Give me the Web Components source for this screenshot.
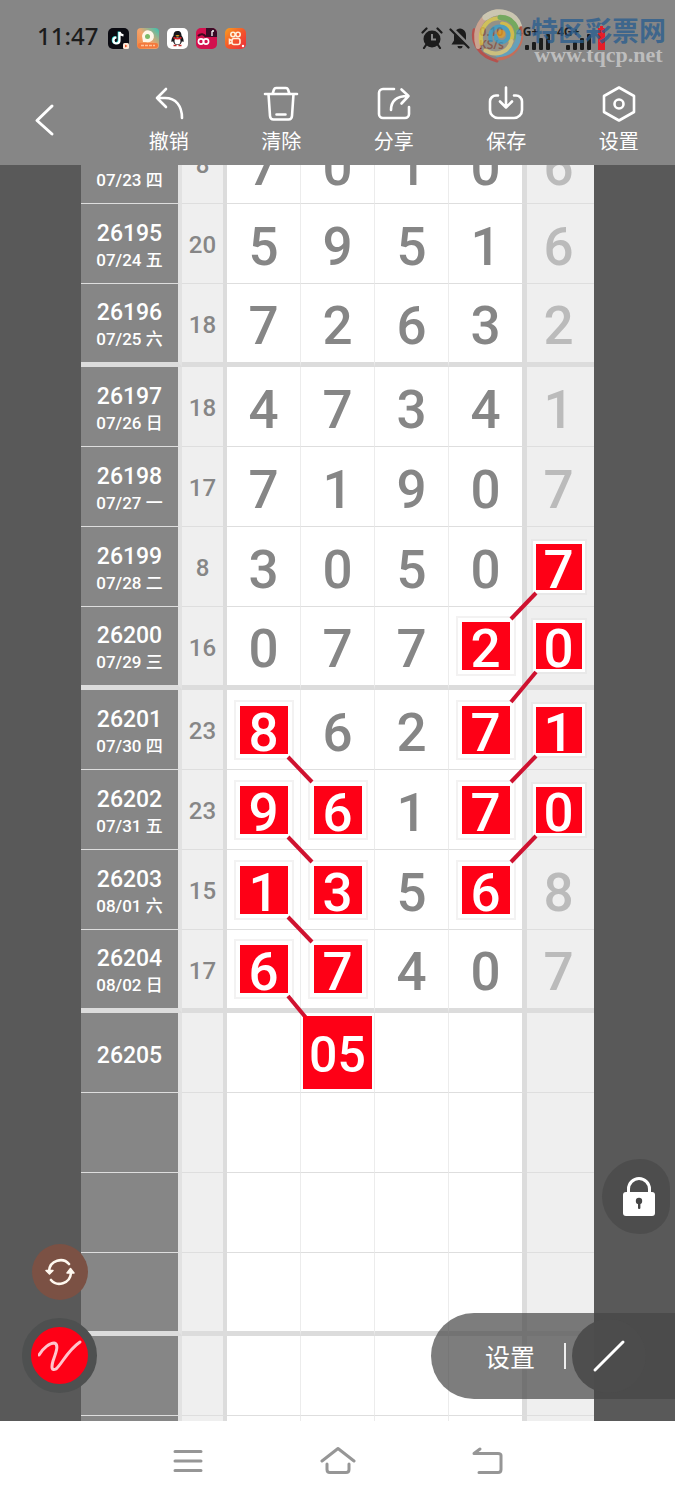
<!DOCTYPE html>
<html lang="zh-CN">
<head>
<meta charset="UTF-8">
<meta name="viewport" content="width=device-width, initial-scale=1.0">
<title>走势图</title>
<style>
  html, body { margin: 0; padding: 0; height: 100%; }
  body {
    font-family: "Roboto", "Noto Sans CJK SC", sans-serif;
    background: #595959;
    color: white;
  }
</style>
</head>
<body>
<trend-app></trend-app>

<script>
class StatusBar extends HTMLElement {
  connectedCallback() {
    this.attachShadow({ mode: 'open' });
    const signal = `
      <span class="signal">
        <span class="net">4G+</span>
        <svg width="26" height="16" viewBox="0 0 26 16" fill="currentColor">
          <rect x="0" y="11" width="4" height="5" rx="1"/>
          <rect x="7" y="8" width="4" height="8" rx="1"/>
          <rect x="14" y="4" width="4" height="12" rx="1"/>
          <rect x="21" y="0" width="4" height="16" rx="1"/>
        </svg>
      </span>`;
    this.shadowRoot.innerHTML = `
      <style>
        :host {
          display: flex;
          align-items: center;
          justify-content: space-between;
          height: 76px;
          padding: 0 70px 0 37px;
          color: #1c1c1c;
          font-family: "Noto Sans", sans-serif;
        }
        .left, .right { display: flex; align-items: center; }
        .left { gap: 8px; }
        .time { font-size: 24px; line-height: 30px; font-weight: 500; margin: 0 2px 4px 0; }
        .right { gap: 6px; }
        .speed {
          font-size: 12px;
          line-height: 13px;
          font-weight: 600;
          text-align: center;
          width: 29px;
          margin-right: 4px;
          color: #6e2a26;
        }
        .signal { display: flex; flex-direction: column; align-items: flex-end; width: 35px; }
        .net { font-size: 12px; line-height: 12px; font-weight: 700; align-self: flex-start; margin-bottom: -4px; }
        svg { display: block; }
      </style>
      <div class="left">
        <span class="time">11:47</span>
        <svg width="21" height="21" viewBox="0 0 21 21">
          <rect width="21" height="21" rx="5" fill="#0b0b12"/>
          <path d="M11.500 4v8.500a3 3 0 1 1-3-3" fill="none" stroke="#35e0dc" stroke-width="2.200" transform="translate(-.7 -.4)"/>
          <path d="M11.500 4v8.500a3 3 0 1 1-3-3M11.500 4c.4 2 1.800 3.200 4 3.400" fill="none" stroke="#fff" stroke-width="2.200"/>
          <rect x="15" y="15" width="6" height="6" rx="1.500" fill="#ffe9d8"/>
          <path d="M17 16.500l2.500 1.500-2.500 1.500z" fill="#f2572a"/>
        </svg>
        <svg width="22" height="21" viewBox="0 0 22 21">
          <defs>
            <linearGradient id="v" x1="0" y1="1" x2="1" y2="0">
              <stop offset="0" stop-color="#f4833d"/><stop offset=".5" stop-color="#f3a36b"/><stop offset="1" stop-color="#2fc5b4"/>
            </linearGradient>
          </defs>
          <rect width="22" height="21" rx="4" fill="url(#v)"/>
          <path d="M5 8a6 6 0 1 1 4 6l-3 0z" fill="#fff6e8"/>
          <circle cx="10.500" cy="8.500" r="2.500" fill="#7cba6a"/>
          <rect x="1" y="15" width="20" height="5" rx="2" fill="#f4793c"/>
          <path d="M4 17.500h14" stroke="#ffc49a" stroke-width="1.500" stroke-dasharray="3 1"/>
        </svg>
        <svg width="21" height="21" viewBox="0 0 21 21">
          <rect width="21" height="21" rx="5" fill="#fff"/>
          <path d="M10.500 3c-3 0-4 2-4 4.500C5 9.500 4 12 4.500 14c1 0 1.500-1 1.500-1 .5 2 1.500 4 4.500 4s4-2 4.500-4c0 0 .5 1 1.500 1 .5-2-.5-4.500-2-6.500C14.500 5 13.500 3 10.500 3z" fill="#15151a"/>
          <ellipse cx="10.500" cy="13" rx="3" ry="3.500" fill="#fff"/>
          <path d="M6.500 9.500c2.500 1.500 5.500 1.500 8 0" stroke="#d8232a" stroke-width="1.600" fill="none"/>
          <ellipse cx="10.500" cy="7.800" rx="2" ry=".8" fill="#e9a01c"/>
          <path d="M6.500 17.500h3M11.500 17.500h3" stroke="#c42b2b" stroke-width="1.500"/>
        </svg>
        <svg width="21" height="21" viewBox="0 0 21 21">
          <rect width="21" height="21" rx="5" fill="#d3104e"/>
          <path d="M10 0h6a5 5 0 0 1 5 5v4H10z" fill="#3a0b26"/>
          <path d="M16 3v5m0-5h2" stroke="#fff" stroke-width="1.300" fill="none"/>
          <circle cx="5" cy="13.500" r="2.600" fill="none" stroke="#fff" stroke-width="1.600"/>
          <circle cx="10" cy="13.500" r="2.600" fill="none" stroke="#fff" stroke-width="1.600"/>
          <path d="M2 8c3-3 6-2 8 1" stroke="#40091f" stroke-width="2" fill="none"/>
        </svg>
        <svg width="21" height="21" viewBox="0 0 21 21">
          <defs>
            <linearGradient id="k" x1="0" y1="0" x2="1" y2="1">
              <stop offset="0" stop-color="#f9a01f"/><stop offset=".5" stop-color="#f4562b"/><stop offset="1" stop-color="#ea2c3c"/>
            </linearGradient>
          </defs>
          <rect width="21" height="21" rx="5" fill="url(#k)"/>
          <g fill="none" stroke="#fff0dc" stroke-width="1.600">
            <circle cx="8" cy="6.500" r="2.200"/><circle cx="13" cy="6.500" r="2.200"/>
            <rect x="7" y="10.500" width="8" height="6" rx="2"/><path d="M7 12.500l-2.500-1v4l2.500-1"/>
          </g>
          <circle cx="18" cy="18" r="1.200" fill="#fff"/>
        </svg>
      </div>
      <div class="right">
        <svg width="22" height="22" viewBox="0 0 22 22">
          <circle cx="11" cy="12" r="8.500" fill="#1c1c1c"/>
          <path d="M1.500 5.500l4-4M20.500 5.500l-4-4M5 18l-2 3M17 18l2 3" stroke="#1c1c1c" stroke-width="2.200" stroke-linecap="round"/>
          <path d="M11 7v5.500h4" fill="none" stroke="#868686" stroke-width="2"/>
        </svg>
        <svg width="22" height="22" viewBox="0 0 22 22">
          <path d="M11 1.500c-4 .5-6 3-6 7v5l-2.500 4h17l-2.500-4v-5c0-4-2-6.500-6-7z" fill="#1c1c1c"/>
          <path d="M8.500 19h5a2.500 2.500 0 0 1-5 0z" fill="#1c1c1c"/>
          <path d="M2.500 1.500l18 18" stroke="#868686" stroke-width="4"/>
          <path d="M1.500 2.500l18 18" stroke="#1c1c1c" stroke-width="2.200" stroke-linecap="round"/>
        </svg>
        <span class="speed">0.10<br>KS/s</span>
        ${signal}
        ${signal}
        <svg width="7" height="24" viewBox="0 0 7 24"><path d="M2 0h3v2h2v22H0V2h2z" fill="#e61e28"/></svg>
      </div>
    `;
  }
}

class SiteMark extends HTMLElement {
  connectedCallback() {
    this.attachShadow({ mode: 'open' });
    this.shadowRoot.innerHTML = `
      <style>
        :host { display: flex; align-items: flex-start; gap: 6px; pointer-events: none; }
        svg { display: block; opacity: .75; }
        .text { display: flex; flex-direction: column; align-items: center; padding-top: 6px; }
        .name {
          font: 700 27px/30px "Noto Sans CJK SC", sans-serif;
          color: rgba(38, 92, 142, .75);
        }
        .url {
          font: 700 22px/20px "Liberation Serif", serif;
          color: rgba(200, 200, 200, .85);
        }
      </style>
      <svg width="54" height="54" viewBox="0 0 52 52" fill="none" stroke-linecap="round">
        <circle cx="26" cy="26" r="20" fill="#a9a38a" opacity=".55"/>
        <path d="M25 50C8 46 0 32 3 20" stroke="#c5413c" stroke-width="3"/>
        <path d="M7 36C2 20 10 6 25 3" stroke="#e0ad94" stroke-width="5"/>
        <path d="M10 33C7 20 16 8 28 9" stroke="#e8d44d" stroke-width="4"/>
        <path d="M14 8C26-1 42 4 46 16" stroke="#e3dcc0" stroke-width="6"/>
        <path d="M28 8c12 0 18 10 16 20" stroke="#6fb552" stroke-width="5"/>
        <path d="M30 14c8 1 12 9 8 17" stroke="#e9cc3a" stroke-width="4"/>
        <path d="M48 18c4 16-8 30-22 30" stroke="#d9664a" stroke-width="3"/>
        <path d="M46 22c1 14-9 22-20 22" stroke="#5aa9cc" stroke-width="5"/>
        <path d="M14 40c10 6 22 2 25-9" stroke="#e4d27c" stroke-width="4"/>
        <path d="M19 30c-2-9 4-14 10-13 7 1 9 9 5 13s-11 1-10-4" stroke="#3aa5d0" stroke-width="4"/>
        <circle cx="29" cy="24" r="4" fill="#e8a425"/>
      </svg>
      <div class="text">
        <span class="name">特区彩票网</span>
        <span class="url">www.tqcp.net</span>
      </div>
    `;
  }
}

class ToolButton extends HTMLElement {
  connectedCallback() {
    this.attachShadow({ mode: 'open' });
    this.shadowRoot.innerHTML = `
      <style>
        :host { display: block; }
        button {
          display: flex;
          flex-direction: column;
          align-items: center;
          gap: 4px;
          width: 100%;
          padding: 0;
          border: none;
          background: transparent;
          color: white;
          font: 400 20px/30px "Noto Sans CJK SC", sans-serif;
          cursor: pointer;
        }
        ::slotted(svg) { display: block; }
      </style>
      <button type="button"><slot name="icon"></slot><slot></slot></button>
    `;
  }
}

class ToolBar extends HTMLElement {
  connectedCallback() {
    this.attachShadow({ mode: 'open' });
    const icon = (d) => `
      <svg slot="icon" width="36" height="36" viewBox="0 0 36 36" fill="none" stroke="#fff" stroke-width="2.600" stroke-linecap="round" stroke-linejoin="round">${d}</svg>`;
    this.shadowRoot.innerHTML = `
      <style>
        :host {
          display: grid;
          grid-template-columns: repeat(6, 1fr);
          padding: 10px 0 9px;
        }
        .back {
          justify-self: start;
          align-self: center;
          margin-left: 32px;
          padding: 0;
          border: none;
          background: transparent;
          cursor: pointer;
        }
        .back svg { display: block; }
      </style>
      <button class="back" type="button" aria-label="返回">
        <svg width="24" height="36" viewBox="0 0 24 36" fill="none" stroke="#fff" stroke-width="3" stroke-linecap="round" stroke-linejoin="round"><path d="M20 3L5 17.500 20 31"/></svg>
      </button>
      <tool-button>${icon('<path d="M15 3L6 12l9 9M6 12h8c11 0 17 8 17 20"/>')}撤销</tool-button>
      <tool-button>${icon('<path d="M2 8h32M9.500 8l1.500-4.500q.6-1.500 2-1.500h10q1.400 0 2 1.500L26.500 8M5.500 8l1.500 22q.3 3.500 3.500 3.500h15q3.200 0 3.500-3.500L30.500 8M13.500 28.500h9"/>')}清除</tool-button>
      <tool-button>${icon('<path d="M18 3H7a4 4 0 0 0-4 4v21a4 4 0 0 0 4 4h22a4 4 0 0 0 4-4v-7M15 24c0-9 5-14 17-14M25.500 3.500L32.500 10l-7 7.500"/>')}分享</tool-button>
      <tool-button>${icon('<path d="M10 9.500H8a6 6 0 0 0-6 6V24a8 8 0 0 0 8 8h16a8 8 0 0 0 8-8v-8.500a6 6 0 0 0-6-6h-2M18 1.500v20M12 15.500l6 6 6-6"/>')}保存</tool-button>
      <tool-button>${icon('<path d="M18 1.500l15 8.500v16l-15 8.500L3 26V10z"/><circle cx="18" cy="18" r="4.500"/>')}设置</tool-button>
    `;
  }
}

// Each draw: issue, date, sum, five digits. A trailing "<" or ">" links a
// marked digit to the next row down, "*" marks it with no link.
const DRAWS = [
  ['26194', '07/23 四', '8', '7', '0', '1', '0', '6'],
  ['26195', '07/24 五', '20', '5', '9', '5', '1', '6'],
  ['26196', '07/25 六', '18', '7', '2', '6', '3', '2'],
  ['26197', '07/26 日', '18', '4', '7', '3', '4', '1'],
  ['26198', '07/27 一', '17', '7', '1', '9', '0', '7'],
  ['26199', '07/28 二', '8', '3', '0', '5', '0', '7<'],
  ['26200', '07/29 三', '16', '0', '7', '7', '2*', '0<'],
  ['26201', '07/30 四', '23', '8>', '6', '2', '7*', '1<'],
  ['26202', '07/31 五', '23', '9>', '6*', '1', '7*', '0<'],
  ['26203', '08/01 六', '15', '1>', '3*', '5', '6*', '8'],
  ['26204', '08/02 日', '17', '6>', '7*', '4', '0', '7'],
  ['26205', '', '', '', '05*', '', '', ''],
  ['', '', '', '', '', '', '', ''],
  ['', '', '', '', '', '', '', ''],
  ['', '', '', '', '', '', '', ''],
  ['', '', '', '', '', '', '', ''],
  ['', '', '', '', '', '', '', ''],
];

class TrendTable extends HTMLElement {
  connectedCallback() {
    this.attachShadow({ mode: 'open' });
    const rows = DRAWS.map((draw, i) => {
      const groupEnd = i % 4 === 2;
      return `<tr class="${groupEnd ? 'group-end' : ''}">${this.row(draw, groupEnd)}</tr>`;
    }).join('');

    this.shadowRoot.innerHTML = `
      <style>
        :host { display: block; background: white; }
        table {
          width: 100%;
          table-layout: fixed;
          border-collapse: separate;
          border-spacing: 0;
        }
        .c-issue { width: 101px; }
        .c-sum { width: 45px; }
        .c-num { width: 74px; }
        .c-num-last { width: 78px; }
        .c-extra { width: 67px; }

        tr { height: 80px; }
        tr.group-end { height: 83px; }
        th, td {
          box-sizing: border-box;
          padding: 0;
          text-align: center;
          vertical-align: middle;
          border-bottom: 1px solid #dedede;
        }
        .group-end > * { border-bottom: 5px solid #dcdcdc; }

        .issue {
          background: #868686;
          border-right: 4px solid #e2e2e2;
          padding-top: 6px;
          font-weight: 500;
          font-size: 23px;
          line-height: 26px;
        }
        .issue small { display: block; font-size: 17px; }
        .sum {
          background: #efefef;
          border-right: 4px solid #dcdcdc;
          padding-top: 3px;
          color: #868686;
          font-size: 24px;
          font-weight: 500;
        }
        .num {
          color: #868686;
          border-right: 1px solid #ececec;
          font-size: 53px;
          font-weight: 500;
        }
        .num.last { border-right: 5px solid #dcdcdc; }
        .num.extra {
          background: #efefef;
          color: #bbb;
          border-right: none;
          padding-right: 4px;
        }

        .digit {
          display: block;
          position: relative;
          width: 48px;
          height: 48px;
          margin: 0 auto;
          line-height: 55px;
        }
        .mark {
          background: #fe0016;
          color: white;
          box-shadow: 0 0 0 4px #fff, 0 0 0 6px #f3f2f2;
        }
        .extra .mark { width: 46px; height: 46px; line-height: 53px; box-shadow: 0 0 0 3px #fff, 0 0 0 5px #e8e8e8; }
        .mark.wide {
          z-index: 2;
          width: 69px;
          height: 73px;
          line-height: 79px;
          font-size: 50px;
          box-shadow: none;
        }
        .link { position: absolute; z-index: 1; top: 100%; overflow: visible; }
        .link.right { left: 100%; }
        .link.left { right: 100%; }
      </style>
      <table>
        <colgroup>
          <col class="c-issue"><col class="c-sum">
          <col class="c-num"><col class="c-num"><col class="c-num"><col class="c-num-last">
          <col class="c-extra">
        </colgroup>
        <tbody>${rows}</tbody>
      </table>
    `;
  }

  row([issue, date, sum, ...nums], groupEnd) {
    const day = date ? `<small>${date}</small>` : '';
    const cells = nums.map((n, i) => {
      const cls = i === 4 ? 'num extra' : i === 3 ? 'num last' : 'num';
      return `<td class="${cls}">${this.digit(n, groupEnd)}</td>`;
    }).join('');
    return `<th class="issue" scope="row">${issue}${day}</th><td class="sum">${sum}</td>${cells}`;
  }

  digit(value, groupEnd) {
    if (!value) return '';
    const text = value.replace(/[<>*]/, '');
    if (text === value) return `<span class="digit">${text}</span>`;
    const wide = text.length > 1 ? ' wide' : '';
    return `<span class="digit mark${wide}">${text}${this.link(value.slice(-1), groupEnd)}</span>`;
  }

  link(dir, groupEnd) {
    if (dir === '*') return '';
    const h = groupEnd ? 32 : 28;
    const d = dir === '>' ? `M0 3L24 ${h}` : `M25 3L0 ${h + 1}`;
    const side = dir === '>' ? 'right' : 'left';
    return `<svg class="link ${side}" width="25" height="${h}"><path d="${d}" stroke="#cf1230" stroke-width="4"/></svg>`;
  }
}

class FloatTools extends HTMLElement {
  connectedCallback() {
    this.attachShadow({ mode: 'open' });
    this.shadowRoot.innerHTML = `
      <style>
        :host { display: block; }
        button {
          display: flex;
          align-items: center;
          justify-content: center;
          padding: 0;
          border: none;
          color: white;
          cursor: pointer;
        }
        svg { display: block; }
        /* Floating over the chart */
        .left, .lock, .panel { position: absolute; z-index: 3; }
        .left {
          left: 22px;
          bottom: 28px;
          display: flex;
          flex-direction: column;
          align-items: center;
          gap: 18px;
        }
        .swap { width: 56px; height: 56px; border-radius: 50%; background: #7b5144; }
        .pen {
          width: 75px;
          height: 75px;
          border-radius: 50%;
          border: 9px solid #4e5050;
          background: #fe0016;
        }
        .lock {
          right: 5px;
          bottom: 187px;
          width: 68px;
          height: 75px;
          padding-left: 6px;
          border-radius: 38px 30px 30px 38px;
          background: #4d4d4d;
        }
        .panel {
          right: 0;
          bottom: 22px;
          display: flex;
          align-items: center;
          height: 86px;
          border-radius: 43px 0 0 43px;
          background: rgba(70, 70, 70, .7);
        }
        .setup {
          height: 100%;
          padding: 0 29px 0 54px;
          background: transparent;
          font: 400 25px/36px "Noto Sans CJK SC", sans-serif;
        }
        .rule { width: 2px; height: 26px; margin-right: 6px; background: #eee; }
        .line { width: 74px; height: 74px; margin-right: 29px; border-radius: 50%; background: rgba(76, 76, 76, .95); }
      </style>
      <div class="left">
        <button class="swap" type="button" aria-label="切换">
          <svg width="32" height="28" viewBox="0 0 32 28" fill="none" stroke="#fff8ef" stroke-width="2.600" stroke-linecap="round">
            <path d="M5 13C6 2 19-1 25 6M27 15C26 26 13 29 7 22"/>
            <path d="M2 12.500h7L5.500 16zM23 15h7l-3.500-4.500z" fill="#fff8ef" stroke-width="1.500" stroke-linejoin="round"/>
          </svg>
        </button>
        <button class="pen" type="button" aria-label="画笔">
          <svg width="44" height="34" viewBox="0 0 44 34" fill="none" stroke="#ffc4cc" stroke-width="3" stroke-linecap="round" stroke-linejoin="round">
            <path d="M1 16C5 9 12 4 16 4c6 1 1 12-1 18-2 7-1 10 3 8C24 25 29 12 42 3"/>
          </svg>
        </button>
      </div>
      <button class="lock" type="button" aria-label="锁定">
        <svg width="34" height="40" viewBox="0 0 34 40">
          <path d="M6.500 17V12a10.500 10.500 0 0 1 21 0v5" fill="none" stroke="#fff" stroke-width="3"/>
          <rect x="1" y="15" width="32" height="24" rx="3" fill="#fff"/>
          <circle cx="17" cy="24" r="3.200" fill="#444"/>
          <rect x="16" y="25" width="2.400" height="7" rx="1" fill="#444"/>
        </svg>
      </button>
      <div class="panel">
        <button class="setup" type="button">设置</button>
        <span class="rule"></span>
        <button class="line" type="button" aria-label="直线">
          <svg width="34" height="34" viewBox="0 0 34 34"><path d="M3 31L31 3" stroke="#fff" stroke-width="3" stroke-linecap="round"/></svg>
        </button>
      </div>
    `;
  }
}

class SystemNav extends HTMLElement {
  connectedCallback() {
    this.attachShadow({ mode: 'open' });
    this.shadowRoot.innerHTML = `
      <style>
        :host {
          display: flex;
          align-items: center;
          justify-content: center;
          gap: 114px;
          height: 79px;
          background: white;
        }
        button { padding: 0; border: none; background: transparent; cursor: pointer; }
        svg { display: block; fill: none; stroke: #969696; stroke-width: 3; stroke-linecap: round; stroke-linejoin: round; }
      </style>
      <button type="button" aria-label="菜单">
        <svg width="36" height="30" viewBox="0 0 36 30"><path d="M5 5.500h26M5 15h26M5 24.500h26"/></svg>
      </button>
      <button type="button" aria-label="主页">
        <svg width="36" height="30" viewBox="0 0 36 30"><path d="M2 15L18 2.500 34 15M7 18v5.500q0 3 3 3h16q3 0 3-3V18"/></svg>
      </button>
      <button type="button" aria-label="后退">
        <svg width="36" height="30" viewBox="0 0 36 30"><path d="M9 26.500h19q3 0 3-3v-14q0-2-3-2H4L10 3"/></svg>
      </button>
    `;
  }
}

class TrendApp extends HTMLElement {
  connectedCallback() {
    this.attachShadow({ mode: 'open' });
    this.shadowRoot.innerHTML = `
      <style>
        :host { display: flex; flex-direction: column; height: 100vh; }
        header { position: relative; z-index: 2; background: #868686; }
        site-mark { position: absolute; top: 9px; right: 9px; }
        main {
          position: relative;
          flex: 1;
          min-height: 0;
          overflow: hidden;
          background: #595959;
        }
        /* The table is scrolled half a row under the header */
        trend-table { width: 76%; margin: -41px auto 0; }
      </style>
      <header>
        <status-bar></status-bar>
        <tool-bar></tool-bar>
        <site-mark></site-mark>
      </header>
      <main>
        <trend-table></trend-table>
        <float-tools></float-tools>
      </main>
      <system-nav></system-nav>
    `;
  }
}

customElements.define('status-bar', StatusBar);
customElements.define('site-mark', SiteMark);
customElements.define('tool-button', ToolButton);
customElements.define('tool-bar', ToolBar);
customElements.define('trend-table', TrendTable);
customElements.define('float-tools', FloatTools);
customElements.define('system-nav', SystemNav);
customElements.define('trend-app', TrendApp);
</script>
</body>
</html>
